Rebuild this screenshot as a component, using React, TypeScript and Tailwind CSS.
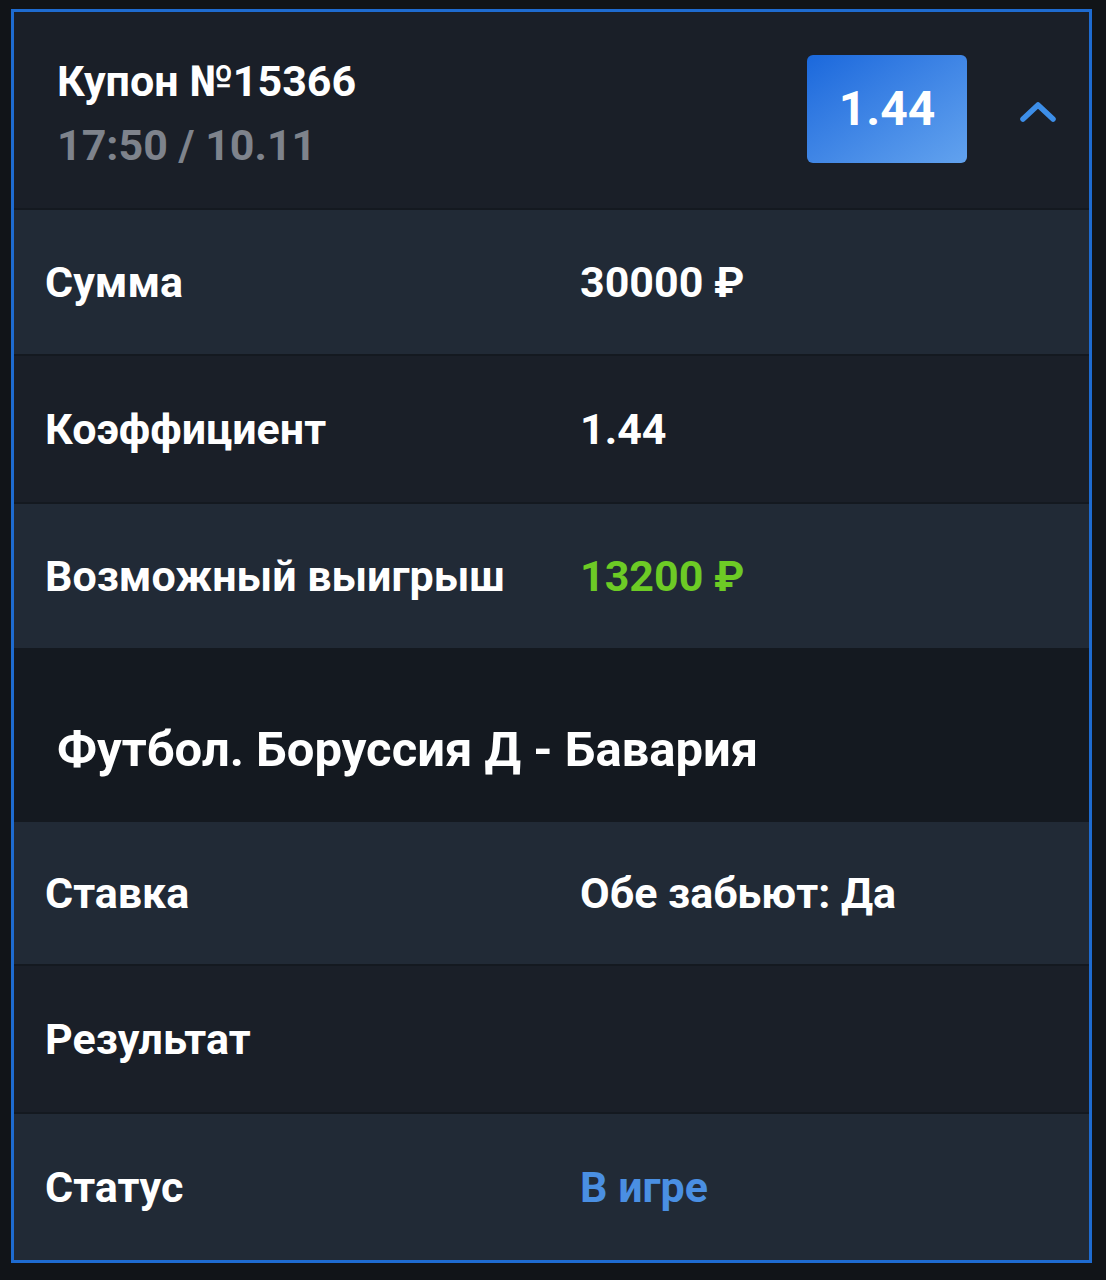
import React from 'react';

const font = { fontFamily: 'Roboto, "Noto Sans", sans-serif' };

type RowProps = {
  label: string;
  value?: string;
  valueClass?: string;
  light?: boolean;
  height?: string;
};

function Row({ label, value, valueClass = 'text-white', light, height = 'h-[148px]' }: RowProps) {
  return (
    <div
      className={`flex ${height} items-center border-b-2 border-[#141920] ${
        light ? 'bg-[#212a36]' : 'bg-[#1a1f28]'
      }`}
    >
      <div className="w-[566px] pl-[31px] text-[43px] font-bold text-white">{label}</div>
      {value && <div className={`text-[43px] font-bold ${valueClass}`}>{value}</div>}
    </div>
  );
}

export default function App() {
  return (
    <div className="min-h-[1280px] bg-[#111418] pt-[9px] pl-[11px]" style={font}>
      <div className="w-[1081px] border-[3px] border-[#1e6bd0] bg-[#1a1f28]">
        {/* Coupon header */}
        <div className="flex h-[198px] items-center border-b-2 border-[#141920] pl-[43px] pr-[30px]">
          <div className="flex-1 pt-[6px]">
            <div className="text-[43px] leading-[50px] font-bold text-white">Купон №15366</div>
            <div className="mt-[14px] text-[43px] leading-[50px] font-bold text-[#7e838c]">17:50 / 10.11</div>
          </div>
          <div className="mb-[2px] flex h-[108px] w-[160px] items-center justify-center rounded-md bg-gradient-to-br from-[#1a68dc] to-[#62a2ee] text-[48px] font-bold text-white">
            1.44
          </div>
          <div className="ml-[50px] mt-[2px] flex w-[42px] items-center justify-center">
            <svg width="38" height="24" viewBox="0 0 38 24" fill="none">
              <path d="M4 20 L19 6 L34 20" stroke="#3d8ee8" strokeWidth="5.5" strokeLinecap="round" strokeLinejoin="round" />
            </svg>
          </div>
        </div>

        <Row label="Сумма" value="30000 ₽" light height="h-[146px]" />
        <Row label="Коэффициент" value="1.44" />
        <Row label="Возможный выигрыш" value="13200 ₽" valueClass="text-[#6dcb25]" light height="h-[146px]" />

        {/* Event title */}
        <div className="flex h-[172px] items-center bg-[#141920] pl-[43px] pt-[28px] text-[49px] font-bold text-white">
          Футбол. Боруссия Д - Бавария
        </div>

        <Row label="Ставка" value="Обе забьют: Да" light height="h-[144px]" />
        <Row label="Результат" />
        <div className="flex h-[146px] items-center bg-[#212a36]">
          <div className="w-[566px] pl-[31px] text-[43px] font-bold text-white">Статус</div>
          <div className="text-[43px] font-bold text-[#4a8fe2]">В игре</div>
        </div>
      </div>
    </div>
  );
}
